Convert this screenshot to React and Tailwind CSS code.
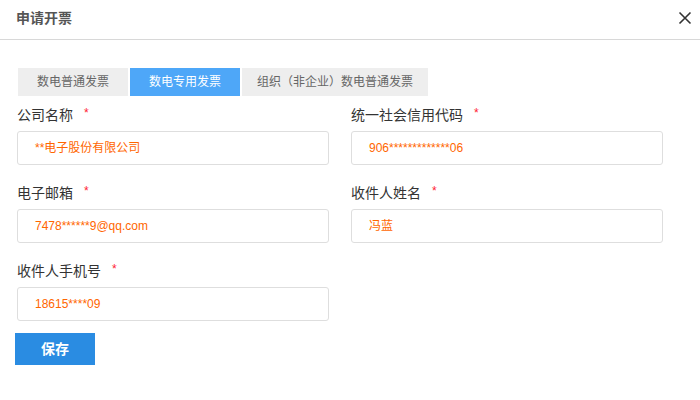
import React, { useState } from "react";

const tabs = ["数电普通发票", "数电专用发票", "组织（非企业）数电普通发票"];

const fields = [
  { label: "公司名称", value: "**电子股份有限公司" },
  { label: "统一社会信用代码", value: "906*************06" },
  { label: "电子邮箱", value: "7478******9@qq.com" },
  { label: "收件人姓名", value: "冯蓝" },
  { label: "收件人手机号", value: "18615****09" },
];

function Field({ label, value }) {
  return (
    <div className="flex flex-col">
      <div className="flex items-center h-5 text-[14px] text-[#333]">
        <span>{label}</span>
        <span className="ml-[11px] text-[12px] text-[#f23] leading-none -mt-1">*</span>
      </div>
      <div className="mt-[6px] h-[34px] border border-[#dedede] rounded-[3px] flex items-center pl-[17px] text-[12px] text-[#ff6600]">
        {value}
      </div>
    </div>
  );
}

export default function App() {
  const [active, setActive] = useState(1);

  return (
    <div
      className="w-[700px] h-[400px] bg-white overflow-hidden"
      style={{ fontFamily: '"Liberation Sans", "Noto Sans CJK SC", sans-serif' }}
    >
      <div className="h-10 border-b border-[#d8d8d8] flex items-center justify-between pl-4 pr-[5px] pb-[3px]">
        <h2 className="text-[14px] font-bold text-[#555]">申请开票</h2>
        <svg width="14" height="14" viewBox="0 0 14 14" className="mr-[3px]">
          <path d="M1.5 1.5 L12.5 12.5 M12.5 1.5 L1.5 12.5" stroke="#333" strokeWidth="1.6" />
        </svg>
      </div>

      <div className="pl-[17px] pr-[37px]">
        <div className="mt-7 ml-px flex gap-[2px]">
          {tabs.map((t, i) => (
            <button
              key={t}
              onClick={() => setActive(i)}
              className={
                "h-7 flex items-center justify-center whitespace-nowrap text-[12px] " +
                (i === 2 ? "w-[186px] " : "w-[110px] ") +
                (active === i ? "bg-[#4ea7f8] text-white" : "bg-[#eeeeee] text-[#666]")
              }
            >
              {t}
            </button>
          ))}
        </div>

        <div className="mt-[9px] grid grid-cols-2 gap-x-[22px] gap-y-[18px]">
          {fields.map((f) => (
            <Field key={f.label} label={f.label} value={f.value} />
          ))}
        </div>

        <button className="mt-3 -ml-[2px] w-20 h-8 bg-[#2a8ce2] text-white text-[14px] font-bold">
          保存
        </button>
      </div>
    </div>
  );
}
